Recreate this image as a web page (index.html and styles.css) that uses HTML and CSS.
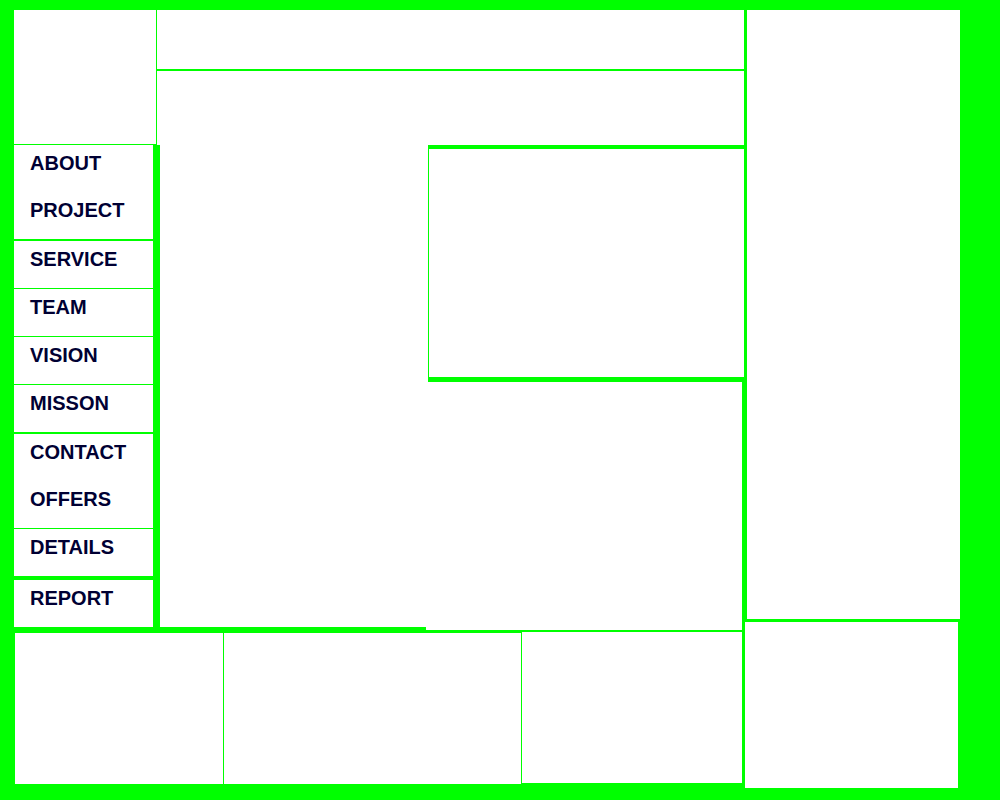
FILE: index.html
```html
<!DOCTYPE html>
<html lang="en">
<head>
<meta charset="utf-8">
<title>Layout</title>
<link rel="stylesheet" href="styles.css">
</head>
<body>
<div class="page">
  <div class="left-area">
    <div class="top">
      <div class="side">
        <div class="logo"></div>
        <ul class="nav">
          <li class="item">ABOUT</li>
          <li class="item line-2">PROJECT</li>
          <li class="item line-1">SERVICE</li>
          <li class="item line-1">TEAM</li>
          <li class="item line-1">VISION</li>
          <li class="item line-2">MISSON</li>
          <li class="item">CONTACT</li>
          <li class="item line-1">OFFERS</li>
          <li class="item line-4">DETAILS</li>
          <li class="item">REPORT</li>
        </ul>
      </div>
      <div class="main">
        <div class="header"></div>
        <div class="content">
          <div class="content-top"></div>
          <div class="content-body">
            <div class="col-a"></div>
            <div class="col-b">
              <div class="panel"></div>
              <div class="col-b-low"></div>
            </div>
          </div>
        </div>
      </div>
    </div>
    <div class="bottom">
      <div class="foot foot-a"></div>
      <div class="foot foot-b"></div>
      <div class="foot foot-c"></div>
    </div>
  </div>
  <div class="right-area">
    <div class="aside"></div>
    <div class="aside-bottom"></div>
  </div>
</div>
</body>
</html>
```
FILE: styles.css
```css
html, body {
  margin: 0;
  padding: 0;
}
body {
  background: #00ff00;
  font-family: "Liberation Sans", Arial, sans-serif;
}
.page {
  display: flex;
  width: 1000px;
  height: 800px;
  padding: 10px 0 0 14px;
  box-sizing: border-box;
}
.left-area {
  width: 731px;
  display: flex;
  flex-direction: column;
}
.top {
  display: flex;
  height: 620px;
}
.side {
  width: 142px;
  display: flex;
  flex-direction: column;
}
.logo {
  height: 134px;
  background: #fff;
}
.nav {
  list-style: none;
  margin: 1px 0 0 0;
  padding: 0;
  width: 139px;
  background: #fff;
  border-right: 3px solid #00ff00;
  align-self: flex-start;
}
.item {
  height: 40px;
  padding: 7px 0 0 16px;
  font-size: 20px;
  line-height: 23px;
  font-weight: bold;
  color: #000033;
  border-bottom: 0 solid #00ff00;
}
.line-1 { border-bottom-width: 1px; }
.line-2 { border-bottom-width: 2px; }
.line-4 { border-bottom-width: 4px; }
.main {
  margin-left: 1px;
  width: 587px;
  display: flex;
  flex-direction: column;
}
.header {
  height: 59px;
  background: #fff;
}
.content {
  margin-top: 2px;
  display: flex;
  flex-direction: column;
}
.content-top {
  height: 74px;
  background: #fff;
}
.content-body {
  display: flex;
  align-items: flex-start;
}
.col-a {
  width: 268px;
  height: 482px;
  background: #fff;
  border-left: 3px solid #00ff00;
}
.col-b {
  width: 316px;
  display: flex;
  flex-direction: column;
}
.panel {
  height: 228px;
  background: #fff;
  border-left: 1px solid #00ff00;
  border-top: 4px solid #00ff00;
  border-bottom: 5px solid #00ff00;
}
.col-b-low {
  margin-left: -2px;
  width: 316px;
  height: 248px;
  background: #fff;
}
.bottom {
  display: flex;
  margin-top: 3px;
  margin-left: 1px;
  gap: 1px;
  align-items: flex-start;
}
.foot {
  height: 151px;
  background: #fff;
}
.foot-a { width: 208px; }
.foot-b { width: 297px; }
.foot-c { width: 220px; margin-top: -1px; }
.right-area {
  width: 215px;
  display: flex;
  flex-direction: column;
}
.aside {
  margin-left: 2px;
  width: 213px;
  height: 609px;
  background: #fff;
}
.aside-bottom {
  margin-top: 3px;
  width: 213px;
  height: 166px;
  background: #fff;
}
```
